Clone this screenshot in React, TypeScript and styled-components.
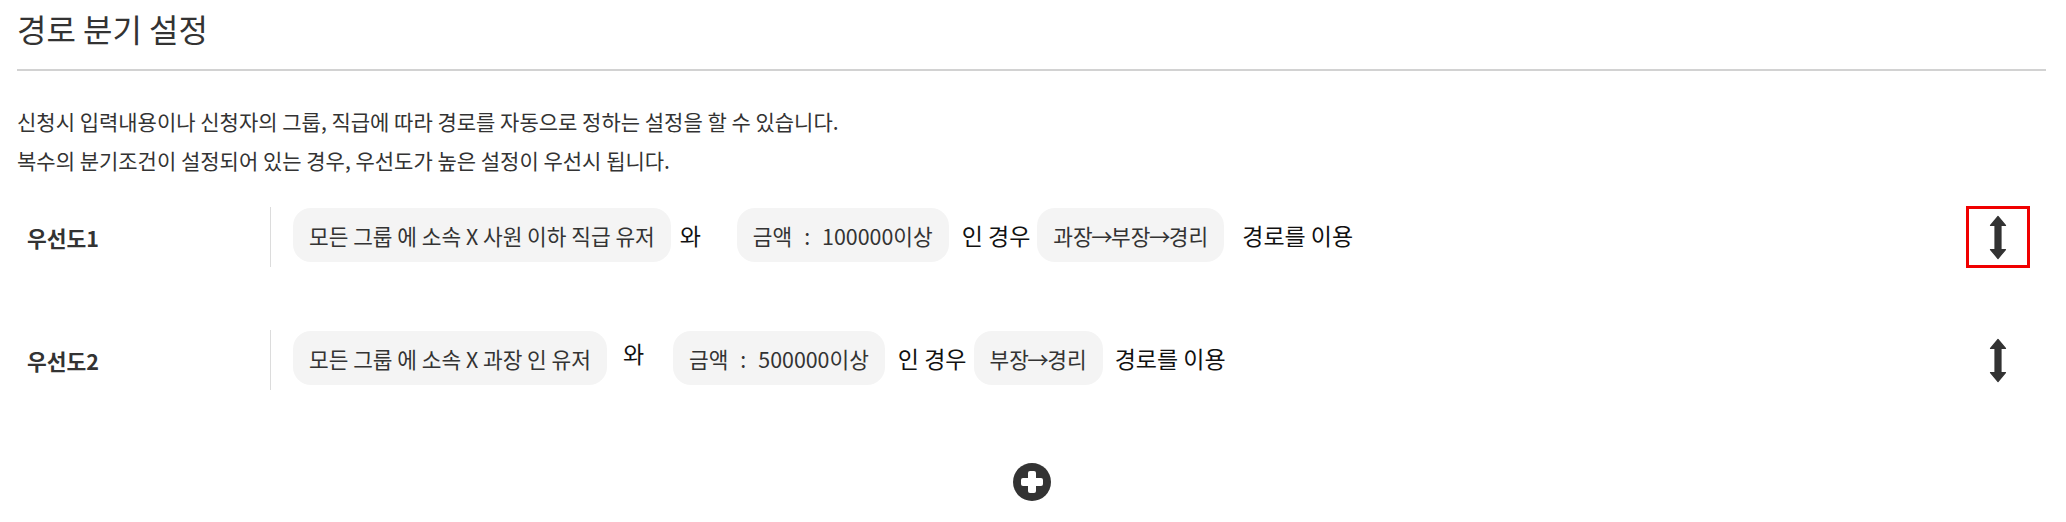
import React from "react";
import styled, { createGlobalStyle } from "styled-components";

const Global = createGlobalStyle`
  html, body { margin: 0; padding: 0; background: #fff; }
  body {
    font-family: "Noto Sans CJK KR", "Noto Sans KR", "Noto Sans", sans-serif;
    color: #333;
  }
  * { box-sizing: border-box; }
`;

const Page = styled.div`
  padding: 0 20px 0 17px;
  width: 2066px;
  height: 522px;
  overflow: hidden;
`;

const Header = styled.header`
  padding-top: 4px;
  padding-bottom: 17px;
  border-bottom: 2px solid #d2d2d2;
`;

const Title = styled.h1`
  margin: 0;
  font-size: 32px;
  line-height: 48px;
  font-weight: 400;
  color: #333;
`;

const Description = styled.div`
  margin-top: 31px;
  font-size: 21px;
  line-height: 39px;
  color: #333;
`;

const DescLine = styled.p`
  margin: 0;
`;

const RuleList = styled.div`
  margin-top: 27px;
  display: flex;
  flex-direction: column;
  gap: 63px;
`;

const Row = styled.div`
  display: flex;
  height: 60px;
`;

const Label = styled.div`
  width: 253px;
  padding-left: 10px;
  display: flex;
  align-items: center;
  font-size: 21.5px;
  font-weight: 700;
  color: #333;
`;

const Divider = styled.div`
  width: 1px;
  align-self: stretch;
  background: #dcdcdc;
`;

const Conditions = styled.div`
  flex: 1;
  display: flex;
  align-items: center;
  padding-left: 22px;
  height: 54px;
  margin-top: 1px;
`;

const Chip = styled.span`
  display: inline-flex;
  align-items: center;
  height: 54px;
  padding: 0 16px;
  border-radius: 18px;
  background: #f4f4f4;
  font-size: 21.4px;
  color: #333;
  white-space: nowrap;
`;

const Gap = styled.span`
  display: inline-block;
  width: 12px;
`;

const RouteArrow = styled.span`
  margin: 0 -1.5px;
`;

const Conj = styled.span<{ $left: number; $raise?: number }>`
  width: 66px;
  padding-left: ${(p) => p.$left}px;
  font-size: 23px;
  color: #111;
  position: relative;
  top: ${(p) => -(p.$raise ?? 0)}px;
`;

const Word = styled.span<{ $left: number; $right: number }>`
  margin-left: ${(p) => p.$left}px;
  margin-right: ${(p) => p.$right}px;
  font-size: 23px;
  color: #111;
  white-space: nowrap;
`;

const SortButton = styled.button<{ $active?: boolean }>`
  width: 64px;
  height: 62px;
  margin-right: 16px;
  flex-shrink: 0;
  align-self: center;
  display: flex;
  align-items: center;
  justify-content: center;
  padding: 0;
  background: transparent;
  border: 3px solid ${(p) => (p.$active ? "#f00000" : "transparent")};
  cursor: pointer;
`;

const PlusRow = styled.div`
  margin-top: 73px;
  display: flex;
  justify-content: center;
`;

const PlusButton = styled.button`
  width: 38px;
  height: 38px;
  padding: 0;
  border: 0;
  background: transparent;
  display: block;
  cursor: pointer;
`;

const SubTitle = styled.h2`
  margin: 18px 0 0;
  padding-left: 9px;
  font-size: 21px;
  line-height: 30px;
  font-weight: 700;
  color: #333;
`;

const SortIcon = () => (
  <svg width="18" height="45" viewBox="0 0 18 45" aria-hidden>
    <path
      d="M9 1.5 L16.5 10.5 L12 10.5 L12 34.5 L16.5 34.5 L9 43.5 L1.5 34.5 L6 34.5 L6 10.5 L1.5 10.5 Z"
      fill="#333"
      stroke="#333"
      strokeWidth="1.2"
      strokeLinejoin="round"
    />
  </svg>
);

const PlusIcon = () => (
  <svg width="38" height="38" viewBox="0 0 38 38" aria-hidden>
    <circle cx="19" cy="19" r="19" fill="#333" />
    <rect x="15" y="8" width="8" height="22" rx="2" fill="#fff" />
    <rect x="8" y="15" width="22" height="8" rx="2" fill="#fff" />
  </svg>
);

type Rule = {
  label: string;
  group: string;
  conjLeft: number;
  conjRaise: number;
  amount: string;
  route: string[];
  tailGap: number;
  active?: boolean;
};

const rules: Rule[] = [
  {
    label: "우선도1",
    group: "모든 그룹 에 소속 X 사원 이하 직급 유저",
    conjLeft: 9,
    conjRaise: 0,
    amount: "100000이상",
    route: ["과장", "부장", "경리"],
    tailGap: 18,
    active: true,
  },
  {
    label: "우선도2",
    group: "모든 그룹 에 소속 X 과장 인 유저",
    conjLeft: 16,
    conjRaise: 5,
    amount: "500000이상",
    route: ["부장", "경리"],
    tailGap: 12,
  },
];

export default function App() {
  return (
    <>
      <Global />
      <Page>
        <Header>
          <Title>경로 분기 설정</Title>
        </Header>
        <Description>
          <DescLine>신청시 입력내용이나 신청자의 그룹, 직급에 따라 경로를 자동으로 정하는 설정을 할 수 있습니다.</DescLine>
          <DescLine>복수의 분기조건이 설정되어 있는 경우, 우선도가 높은 설정이 우선시 됩니다.</DescLine>
        </Description>
        <RuleList>
          {rules.map((r) => (
            <Row key={r.label}>
              <Label>{r.label}</Label>
              <Divider />
              <Conditions>
                <Chip>{r.group}</Chip>
                <Conj $left={r.conjLeft} $raise={r.conjRaise}>와</Conj>
                <Chip>
                  금액<Gap />:<Gap />{r.amount}
                </Chip>
                <Word $left={13} $right={7}>인 경우</Word>
                <Chip>
                  {r.route.map((step, i) => (
                    <React.Fragment key={step}>
                      {i > 0 && <RouteArrow>→</RouteArrow>}
                      {step}
                    </React.Fragment>
                  ))}
                </Chip>
                <Word $left={r.tailGap} $right={0}>경로를 이용</Word>
              </Conditions>
              <SortButton $active={r.active} aria-label="순서 변경">
                <SortIcon />
              </SortButton>
            </Row>
          ))}
        </RuleList>
        <PlusRow>
          <PlusButton aria-label="추가">
            <PlusIcon />
          </PlusButton>
        </PlusRow>
        <SubTitle>기본 경로 설정</SubTitle>
      </Page>
    </>
  );
}
